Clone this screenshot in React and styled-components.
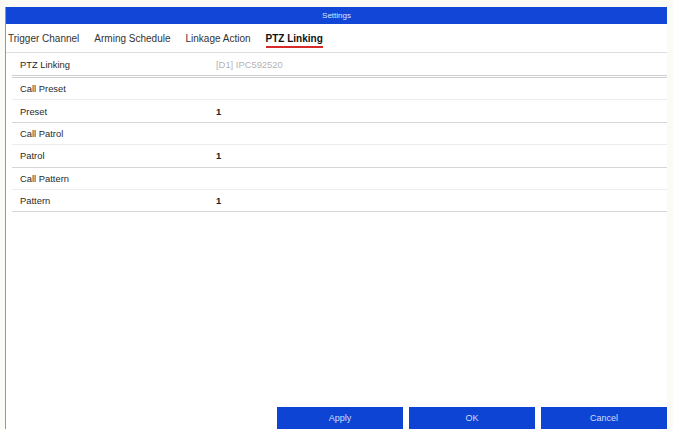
import styled, { createGlobalStyle } from "styled-components";

const GlobalStyle = createGlobalStyle`
    html, body {
        margin: 0;
        padding: 0;
        background: #fbfbf6;
    }
    body {
        font-family: "Liberation Sans", Arial, sans-serif;
    }
`;

const Dialog = styled.div`
    display: flex;
    flex-direction: column;
    width: 661px;
    height: 422px;
    margin: 7px 0 0 5px;
    background: #fff;
    border-left: 1px solid #8d9aa6;
    overflow: hidden;
`;

const TitleBar = styled.div`
    height: 17px;
    display: flex;
    align-items: center;
    justify-content: center;
    background: #1246d6;
    color: #dbe5ff;
    font-size: 8px;
`;

const TabBar = styled.div`
    display: flex;
    align-items: stretch;
    gap: 15px;
    height: 28px;
    padding-left: 2px;
    border-bottom: 1px solid #dedede;
`;

const Tab = styled.div`
    display: flex;
    align-items: center;
    position: relative;
    font-size: 10px;
    color: ${(p) => (p.$active ? "#111" : "#333")};
    font-weight: ${(p) => (p.$active ? 600 : 500)};

    &::after {
        content: "";
        display: ${(p) => (p.$active ? "block" : "none")};
        position: absolute;
        left: 0;
        right: 0;
        bottom: 4px;
        height: 2px;
        background: #d62a2a;
    }
`;

const Content = styled.div`
    display: flex;
    flex-direction: column;
    padding-left: 6px;
`;

const Row = styled.div`
    display: grid;
    grid-template-columns: 196px 1fr;
    align-items: center;
    height: 21.4px;
    padding-left: 8px;
    font-size: 9.4px;
    color: #2a2a2a;
    border-bottom: ${(p) => (p.$header ? "1px solid #ececec" : "1px solid #d6d6d6")};
`;

const TopRow = styled(Row)`
    height: 22px;
    border-bottom: 3px double #cfcfcf;
`;

const Value = styled.span`
    color: ${(p) => (p.$muted ? "#b4b4b4" : "#222")};
    font-weight: ${(p) => (p.$muted ? 400 : 600)};
`;

const Footer = styled.div`
    margin-top: auto;
    display: flex;
    justify-content: flex-end;
    gap: 6px;
`;

const Button = styled.button`
    width: 126px;
    height: 22px;
    border: none;
    background: #0d44d4;
    color: #d2defc;
    font-family: "Liberation Sans", Arial, sans-serif;
    font-size: 9px;
    padding: 0;
`;

const rows = [
    { label: "Call Preset", header: true },
    { label: "Preset", value: "1" },
    { label: "Call Patrol", header: true },
    { label: "Patrol", value: "1" },
    { label: "Call Pattern", header: true },
    { label: "Pattern", value: "1" },
];

const tabs = ["Trigger Channel", "Arming Schedule", "Linkage Action", "PTZ Linking"];

export default function App() {
    return (
        <>
            <GlobalStyle />
            <Dialog>
                <TitleBar>Settings</TitleBar>
                <TabBar>
                    {tabs.map((t, idx) => (
                        <Tab key={t} $active={idx === 3}>{t}</Tab>
                    ))}
                </TabBar>
                <Content>
                    <TopRow>
                        <span>PTZ Linking</span>
                        <Value $muted>[D1] IPC592520</Value>
                    </TopRow>
                    {rows.map((r) => (
                        <Row key={r.label} $header={r.header}>
                            <span>{r.label}</span>
                            {r.value && <Value>{r.value}</Value>}
                        </Row>
                    ))}
                </Content>
                <Footer>
                    <Button>Apply</Button>
                    <Button>OK</Button>
                    <Button>Cancel</Button>
                </Footer>
            </Dialog>
        </>
    );
}
